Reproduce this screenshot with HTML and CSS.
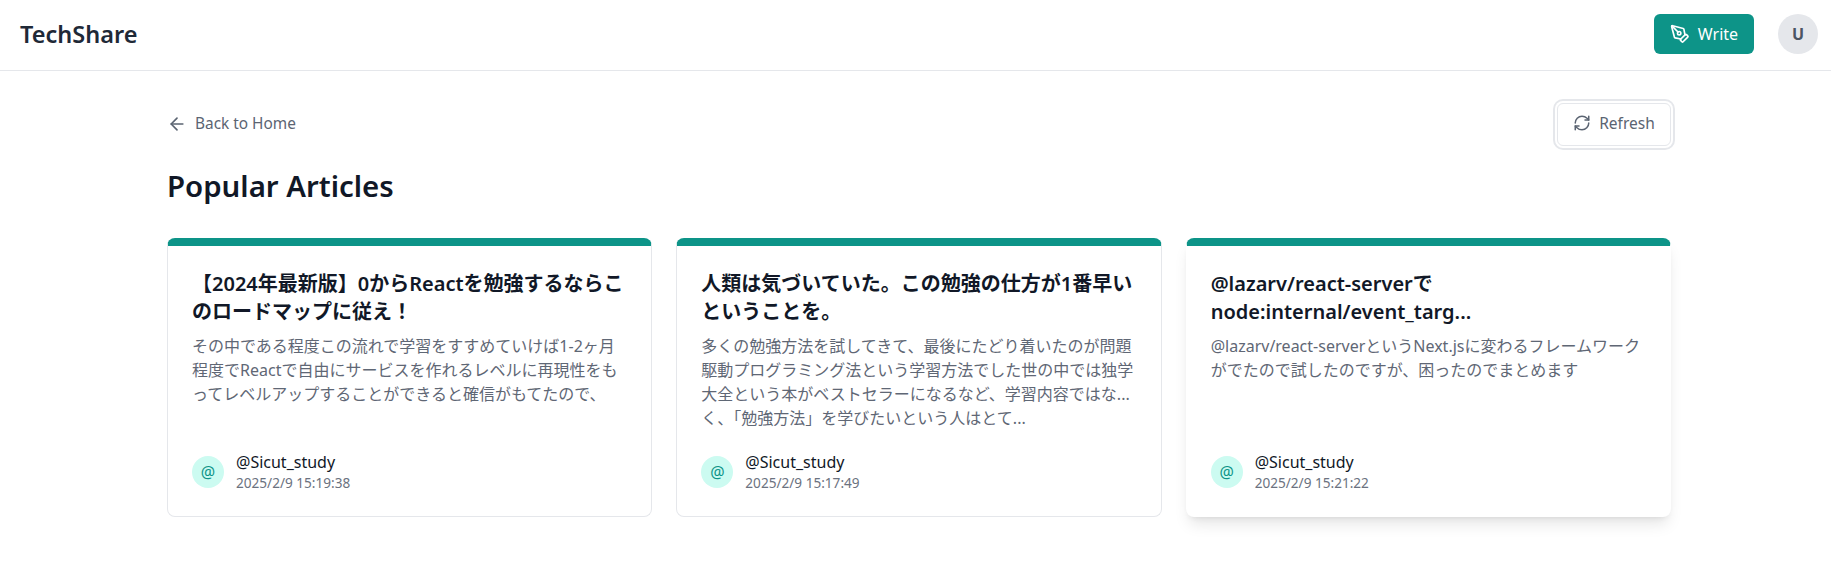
FILE: index.html
```html
<!DOCTYPE html>
<html lang="en">
<head>
    <meta charset="UTF-8">
    <meta name="viewport" content="width=device-width, initial-scale=1.0">
    <title>TechShare</title>
    <link rel="stylesheet" href="styles.css">
</head>
<body>
    <header class="site-header">
        <div class="logo">TechShare</div>
        <div class="header-actions">
            <button class="write-btn">
                <svg class="icon" viewBox="0 0 24 24"><path d="M15.707 21.293a1 1 0 0 1-1.414 0l-1.586-1.586a1 1 0 0 1 0-1.414l5.586-5.586a1 1 0 0 1 1.414 0l1.586 1.586a1 1 0 0 1 0 1.414z"/><path d="m18 13-1.375-6.874a1 1 0 0 0-.746-.776L3.235 2.028a1 1 0 0 0-1.207 1.207L5.35 15.879a1 1 0 0 0 .776.746L13 18"/><path d="m2.3 2.3 7.286 7.286"/><circle cx="11" cy="11" r="2"/></svg>
                Write
            </button>
            <div class="user-avatar">U</div>
        </div>
    </header>

    <main class="content">
        <div class="toolbar">
            <a class="back-link">
                <svg class="icon" viewBox="0 0 24 24"><path d="m12 19-7-7 7-7"/><path d="M19 12H5"/></svg>
                Back to Home
            </a>
            <button class="refresh-btn">
                <svg class="icon icon-small" viewBox="0 0 24 24"><path d="M3 12a9 9 0 0 1 9-9 9.75 9.75 0 0 1 6.74 2.74L21 8"/><path d="M21 3v5h-5"/><path d="M21 12a9 9 0 0 1-9 9 9.75 9.75 0 0 1-6.74-2.74L3 16"/><path d="M8 16H3v5"/></svg>
                Refresh
            </button>
        </div>

        <h1 class="page-title">Popular Articles</h1>

        <div class="article-grid">
            <article class="article-card">
                <h2 class="article-title">【2024年最新版】0からReactを勉強するならこのロードマップに従え！</h2>
                <p class="article-desc">その中である程度この流れで学習をすすめていけば1-2ヶ月程度でReactで自由にサービスを作れるレベルに再現性をもってレベルアップすることができると確信がもてたので、</p>
                <div class="author">
                    <div class="author-avatar">@</div>
                    <div>
                        <div class="author-name">@Sicut_study</div>
                        <div class="author-date">2025/2/9 15:19:38</div>
                    </div>
                </div>
            </article>

            <article class="article-card">
                <h2 class="article-title">人類は気づいていた。この勉強の仕方が1番早いということを。</h2>
                <p class="article-desc">多くの勉強方法を試してきて、最後にたどり着いたのが問題駆動プログラミング法という学習方法でした世の中では独学大全という本がベストセラーになるなど、学習内容ではな...<br>く、「勉強方法」を学びたいという人はとて...</p>
                <div class="author">
                    <div class="author-avatar">@</div>
                    <div>
                        <div class="author-name">@Sicut_study</div>
                        <div class="author-date">2025/2/9 15:17:49</div>
                    </div>
                </div>
            </article>

            <article class="article-card is-hover">
                <h2 class="article-title">@lazarv/react-serverで node:internal/event_targ...</h2>
                <p class="article-desc">@lazarv/react-serverというNext.jsに変わるフレームワークがでたので試したのですが、困ったのでまとめます</p>
                <div class="author">
                    <div class="author-avatar">@</div>
                    <div>
                        <div class="author-name">@Sicut_study</div>
                        <div class="author-date">2025/2/9 15:21:22</div>
                    </div>
                </div>
            </article>
        </div>
    </main>
</body>
</html>
```

FILE: styles.css
```css
* {
    box-sizing: border-box;
}

body {
    margin: 0;
    background: #fff;
    color: #111827;
    font-family: 'Noto Sans', 'Noto Sans CJK JP', sans-serif;
}

.icon {
    width: 20px;
    height: 20px;
    fill: none;
    stroke: currentColor;
    stroke-width: 2;
    stroke-linecap: round;
    stroke-linejoin: round;
    flex-shrink: 0;
}

.icon-small {
    width: 18px;
    height: 18px;
}

.site-header {
    height: 71px;
    padding: 0 13px 2px 20px;
    display: flex;
    align-items: center;
    justify-content: space-between;
    border-bottom: 1px solid #e5e7eb;
}

.logo {
    font-size: 23.5px;
    font-weight: 600;
    color: #1f2937;
}

.header-actions {
    display: flex;
    align-items: center;
    gap: 24px;
}

.write-btn {
    width: 100px;
    height: 40px;
    display: flex;
    align-items: center;
    justify-content: center;
    gap: 8px;
    background: #0d9488;
    color: #fff;
    border: none;
    border-radius: 6px;
    font: inherit;
    font-size: 16px;
}

.user-avatar {
    width: 40px;
    height: 40px;
    border-radius: 50%;
    background: #e5e7eb;
    color: #4b5563;
    font-weight: 700;
    display: flex;
    align-items: center;
    justify-content: center;
}

.content {
    padding: 32px 160px 40px 167px;
}

.toolbar {
    display: flex;
    align-items: center;
    justify-content: space-between;
}

.back-link {
    display: flex;
    align-items: center;
    gap: 8px;
    padding-bottom: 2px;
    color: #5b6472;
    font-size: 15.4px;
}

.refresh-btn {
    height: 43px;
    width: 114px;
    padding: 0 0 3px;
    display: flex;
    align-items: center;
    justify-content: center;
    gap: 8px;
    background: #fff;
    color: #5b6472;
    border: 1px solid #e5e7eb;
    border-radius: 6px;
    box-shadow: 0 0 0 2px #fff, 0 0 0 4px #e5e7eb;
    font: inherit;
    font-size: 15.5px;
}

.page-title {
    margin: 22px 0 34px;
    font-size: 29.4px;
    line-height: 36px;
    font-weight: 600;
}

.article-grid {
    display: grid;
    grid-template-columns: repeat(3, 1fr);
    gap: 24px;
}

.article-card {
    height: 279px;
    padding: 24px 24px 23px;
    display: flex;
    flex-direction: column;
    background: #fff;
    border: 1px solid #e5e7eb;
    border-top: 8px solid #0d9488;
    border-radius: 8px;
}

.article-card.is-hover {
    border-left-color: transparent;
    border-right-color: transparent;
    border-bottom-color: transparent;
    box-shadow: 0 10px 15px -3px rgba(0,0,0,0.1), 0 4px 6px -4px rgba(0,0,0,0.1);
}

.article-title {
    margin: 0;
    font-size: 20px;
    line-height: 28px;
    font-weight: 600;
    color: #111827;
}

.article-desc {
    margin: 8px 0 0;
    font-size: 16px;
    line-height: 24px;
    color: #5f6775;
}

.author {
    margin-top: auto;
    display: flex;
    align-items: center;
    gap: 12px;
}

.author-avatar {
    width: 32px;
    height: 32px;
    border-radius: 50%;
    background: #ccfbf1;
    color: #0d9488;
    display: flex;
    align-items: center;
    justify-content: center;
    font-size: 16px;
}

.author-name {
    font-size: 16px;
    line-height: 22px;
    color: #111827;
}

.author-date {
    font-size: 13.6px;
    line-height: 20px;
    color: #6b7280;
}
```
